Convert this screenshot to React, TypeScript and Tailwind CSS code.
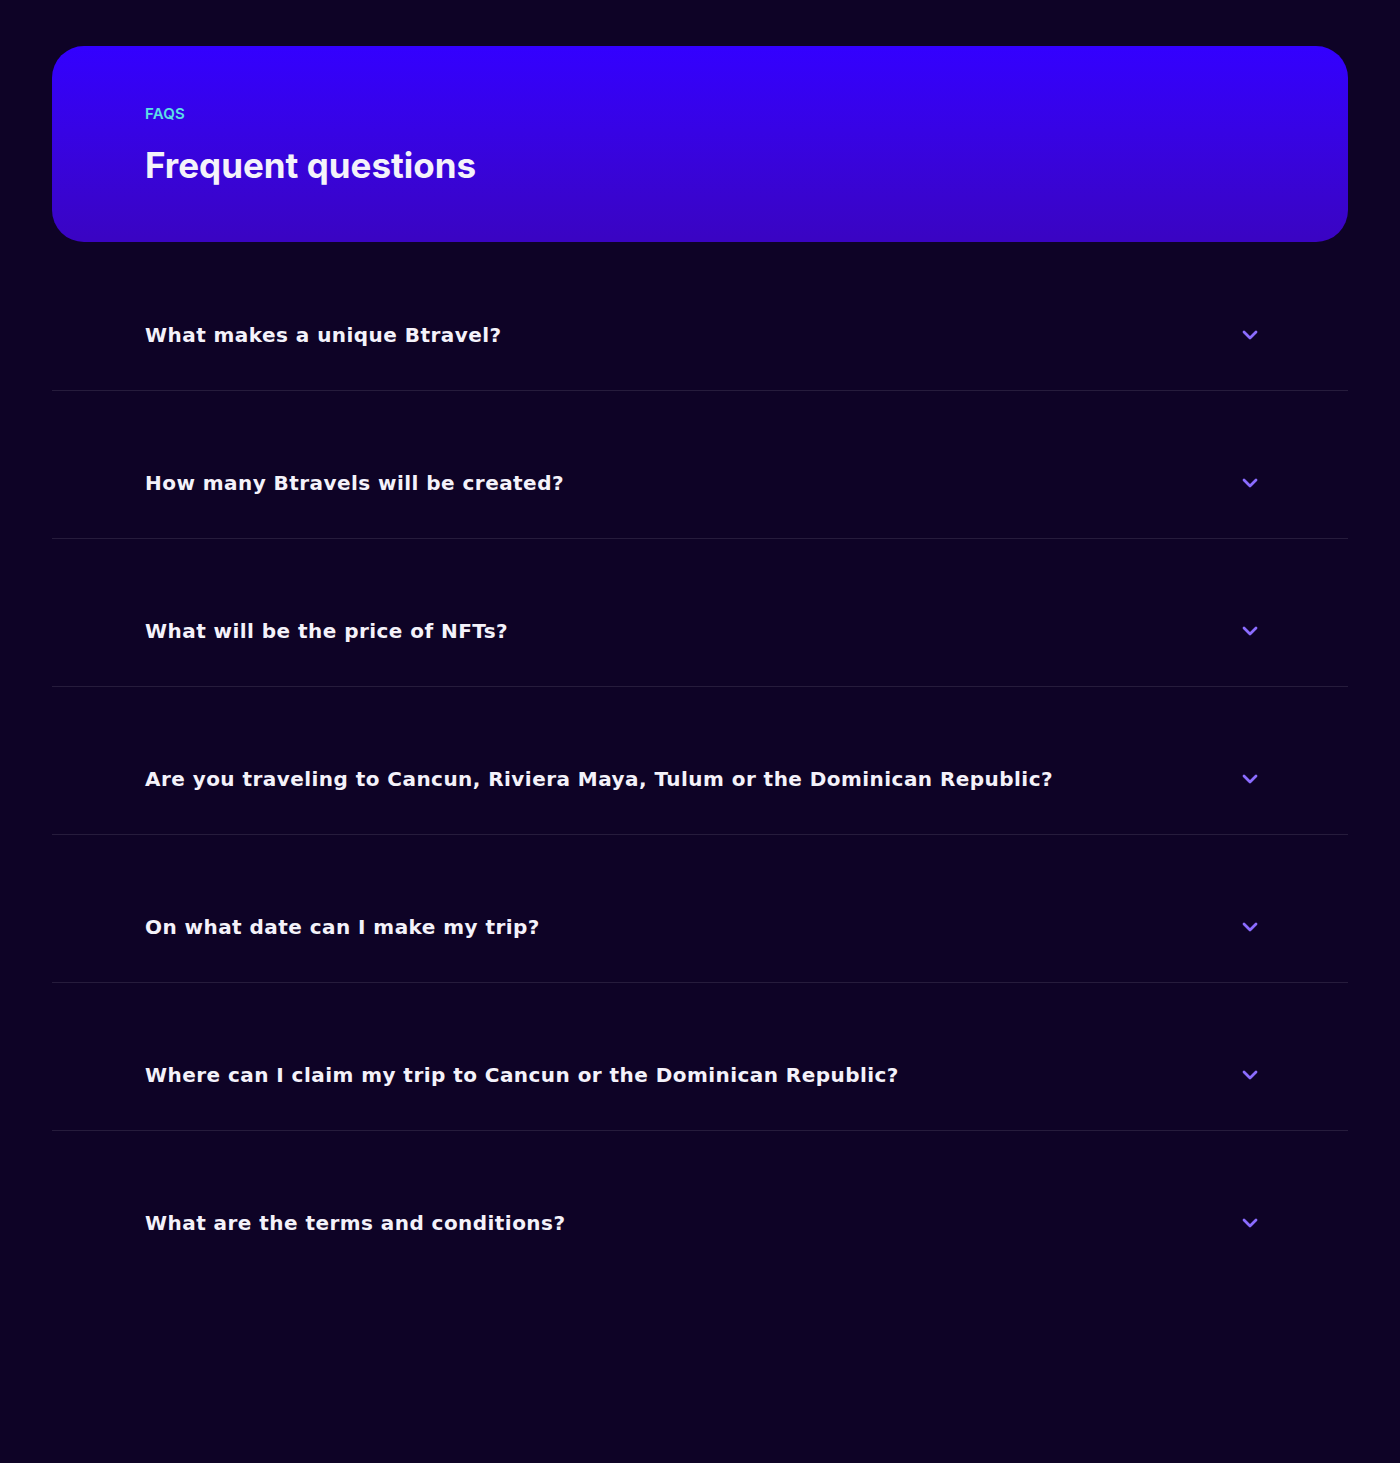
const QUESTIONS = [
  "What makes a unique Btravel?",
  "How many Btravels will be created?",
  "What will be the price of NFTs?",
  "Are you traveling to Cancun, Riviera Maya, Tulum or the Dominican Republic?",
  "On what date can I make my trip?",
  "Where can I claim my trip to Cancun or the Dominican Republic?",
  "What are the terms and conditions?",
];

function Chevron() {
  return (
    <svg width="18" height="12" viewBox="0 0 18 12" fill="none" className="text-[#8b6cff]">
      <polyline points="3,3 9,9 15,3" stroke="currentColor" strokeWidth="2.8" strokeLinecap="round" strokeLinejoin="round" />
    </svg>
  );
}

function FaqItem({ question, last }: { question: string; last: boolean }) {
  return (
    <div className={last ? "pt-[37px]" : "border-b border-white/10 pt-[37px]"}>
      <button className="flex h-[110px] w-full items-center justify-between pl-[93px] pr-[89px] text-left">
        <span className="font-['DejaVu_Sans',sans-serif] text-[20px] font-bold tracking-[0.45px] text-[#f4f2fa]">
          {question}
        </span>
        <Chevron />
      </button>
    </div>
  );
}

export default function App() {
  return (
    <div className="min-h-[1463px] bg-[#0e0326] px-[52px] pt-[46px] font-['Inter',sans-serif]">
      <header className="h-[196px] rounded-[32px] bg-gradient-to-b from-[#3300ff] to-[#3a04c2] px-[93px] pt-[58px]">
        <p className="text-[15px] leading-[20px] font-semibold tracking-[0.2px] text-[#5ce1e6]">FAQS</p>
        <h2 className="mt-[21px] text-[35px] leading-[40px] font-bold text-[#f4f2fa]">Frequent questions</h2>
      </header>
      <div className="pt-px">
        {QUESTIONS.map((q, i) => (
          <FaqItem key={q} question={q} last={i === QUESTIONS.length - 1} />
        ))}
      </div>
    </div>
  );
}
